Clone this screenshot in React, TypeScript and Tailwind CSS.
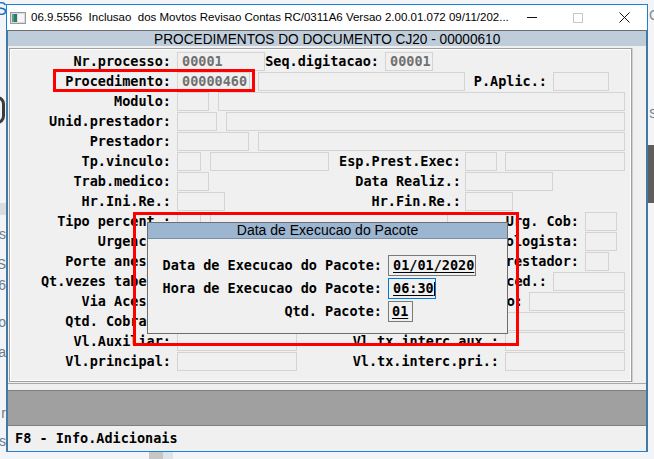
import React from "react"

const MONO = "font-['DejaVu_Sans_Mono','Liberation_Mono',monospace] font-bold text-[13.5px]"

type LblProps = { w: string; cls?: string; children: React.ReactNode }
const Lbl = ({ w, cls = "", children }: LblProps) => (
  <span className={`${w} ${cls} shrink-0 whitespace-nowrap text-right leading-[19px] text-black`}>
    {children}
  </span>
)

type FldProps = { w: string; cls?: string; v?: string }
const Fld = ({ w, cls = "", v }: FldProps) => (
  <div
    className={`${w} ${cls} h-[19px] shrink-0 border border-[#d4d4d4] bg-[#f0f0f0] pl-[4px] leading-[17px] text-[#707070]`}
  >
    {v}
  </div>
)

const Row = ({ children }: { children: React.ReactNode }) => (
  <div className="flex h-[20px]">{children}</div>
)

const Left = ({ children }: { children: React.ReactNode }) => (
  <Lbl w="w-[159px]">{children}</Lbl>
)

const Desktop = () => (
  <>
    <span className="absolute left-[-5px] top-[-4px] text-[18px] text-[#1d6fc2]">S</span>
    <div className="absolute left-[-12px] top-[96px] h-[28px] w-[17px] rounded-[8px] border-[3px] border-[#3c3c3c]" />
    <div className="absolute left-0 top-[203px] h-[12px] w-[6px] bg-[#d9dde2]" />
    <span className="absolute right-[648px] top-[224px] text-[14px] text-[#6b7c8f]">es</span>
    <span className="absolute right-[648px] top-[254px] text-[14px] text-[#6b7c8f]">S</span>
    <span className="absolute right-[648px] top-[275px] text-[14px] text-[#6b7c8f]">6</span>
    <span className="absolute right-[648px] top-[312px] text-[14px] text-[#6b7c8f]">ro</span>
    <span className="absolute right-[648px] top-[342px] text-[14px] text-[#6b7c8f]">ia</span>
    <span className="absolute right-[648px] top-[403px] text-[14px] text-[#6b7c8f]">r</span>
    <span className="absolute right-[648px] top-[431px] text-[14px] text-[#6b7c8f]">s</span>
    <span className="absolute left-[649px] top-[5px] text-[14px] text-[#8a8a8a]">C</span>
    <span className="absolute left-[649px] top-[104px] text-[13px] text-[#6b7c8f]">SL</span>
    <div className="absolute left-[648px] top-[145px] h-[58px] w-[6px] bg-[#5e5e5e]" />
    <div className="absolute left-[149px] top-[452px] h-[7px] w-[14px] bg-[#c6c6c6]" />
    <div className="absolute left-[163px] top-[452px] h-[7px] w-[10px] bg-[#dde3ea]" />
  </>
)

const TitleBar = () => (
  <div className="flex h-[25px] shrink-0 items-center bg-white">
    <svg className="ml-[3px] shrink-0" width="16" height="16" viewBox="0 0 16 16">
      <rect x="0.5" y="2.5" width="15" height="11" fill="#dcdcdc" stroke="#9a9a9a" />
      <rect x="2" y="4" width="5" height="8" fill="#2f7a6c" />
      <rect x="2" y="4" width="2" height="8" fill="#56a08f" />
      <rect x="8" y="4" width="6" height="8" fill="#f6f6f6" />
    </svg>
    <span className="ml-[5px] flex-1 overflow-hidden whitespace-pre text-[11.5px] text-black">
      06.9.5556  Inclusao  dos Movtos Revisao Contas RC/0311A6 Versao 2.00.01.072 09/11/202...
    </span>
    <div className="flex h-full w-[46px] items-center justify-center">
      <div className="h-px w-[10px] bg-[#111]" />
    </div>
    <div className="flex h-full w-[46px] items-center justify-center">
      <div className="h-[10px] w-[10px] border border-[#c8c8c8]" />
    </div>
    <div className="flex h-full w-[46px] items-center justify-center">
      <svg width="11" height="11" viewBox="0 0 11 11">
        <path d="M0.5 0.5 L10.5 10.5 M10.5 0.5 L0.5 10.5" stroke="#111" strokeWidth="1" />
      </svg>
    </div>
  </div>
)

const Form = () => (
  <div className={`flex flex-col pl-[1px] pt-[2px] ${MONO}`}>
    <Row>
      <Left>Nr.processo:</Left>
      <Fld w="w-[88px]" cls="ml-[6px]" v="00001" />
      <Lbl w="w-[114px]">Seq.digitacao:</Lbl>
      <Fld w="w-[48px]" cls="ml-[6px]" v="00001" />
    </Row>
    <Row>
      <Left>Procedimento:</Left>
      <Fld w="w-[73px]" cls="ml-[6px]" v="00000460" />
      <Fld w="w-[207px]" cls="ml-[8px]" />
      <Lbl w="w-[82px]">P.Aplic.:</Lbl>
      <Fld w="w-[56px]" cls="ml-[6px]" />
    </Row>
    <Row>
      <Left>Modulo:</Left>
      <Fld w="w-[32px]" cls="ml-[6px]" />
      <Fld w="w-[407px]" cls="ml-[9px]" />
    </Row>
    <Row>
      <Left>Unid.prestador:</Left>
      <Fld w="w-[40px]" cls="ml-[6px]" />
      <Fld w="w-[399px]" cls="ml-[9px]" />
    </Row>
    <Row>
      <Left>Prestador:</Left>
      <Fld w="w-[72px]" cls="ml-[6px]" />
      <Fld w="w-[367px]" cls="ml-[9px]" />
    </Row>
    <Row>
      <Left>Tp.vinculo:</Left>
      <Fld w="w-[24px]" cls="ml-[6px]" />
      <Fld w="w-[119px]" cls="ml-[9px]" />
      <Lbl w="w-[132px]">Esp.Prest.Exec:</Lbl>
      <Fld w="w-[32px]" cls="ml-[4px]" />
      <Fld w="w-[120px]" cls="ml-[8px]" />
    </Row>
    <Row>
      <Left>Trab.medico:</Left>
      <Fld w="w-[32px]" cls="ml-[6px]" />
      <Lbl w="w-[252px]">Data Realiz.:</Lbl>
      <Fld w="w-[88px]" cls="ml-[4px]" />
    </Row>
    <Row>
      <Left>Hr.Ini.Re.:</Left>
      <Fld w="w-[48px]" cls="ml-[6px]" />
      <Lbl w="w-[236px]">Hr.Fin.Re.:</Lbl>
      <Fld w="w-[48px]" cls="ml-[4px]" />
    </Row>
    <Row>
      <Left>Tipo percent.:</Left>
      <Fld w="w-[24px]" cls="ml-[6px]" />
      <Fld w="w-[238px]" cls="ml-[9px]" />
      <Lbl w="w-[131px]">Urg. Cob:</Lbl>
      <Fld w="w-[32px]" cls="ml-[6px]" />
    </Row>
    <Row>
      <Left>Urgencia:</Left>
      <Fld w="w-[24px]" cls="ml-[6px]" />
      <Fld w="w-[119px]" cls="ml-[9px]" />
      <Lbl w="w-[250px]">Anestesiologista:</Lbl>
      <Fld w="w-[32px]" cls="ml-[6px]" />
    </Row>
    <Row>
      <Left>Porte anest.:</Left>
      <Fld w="w-[48px]" cls="ml-[6px]" />
      <Lbl w="w-[354px]">Prestador:</Lbl>
      <Fld w="w-[24px]" cls="ml-[6px]" />
    </Row>
    <Row>
      <Left>Qt.vezes tabela:</Left>
      <Fld w="w-[32px]" cls="ml-[6px]" />
      <Lbl w="w-[338px]">Tp.proced.:</Lbl>
      <Fld w="w-[72px]" cls="ml-[6px]" />
    </Row>
    <Row>
      <Left>Via Acesso:</Left>
      <Fld w="w-[24px]" cls="ml-[6px]" />
      <Lbl w="w-[322px]">Participacao:</Lbl>
      <Fld w="w-[96px]" cls="ml-[6px]" />
    </Row>
    <Row>
      <Left>Qtd. Cobrada:</Left>
      <Fld w="w-[80px]" cls="ml-[6px]" />
      <Fld w="w-[120px]" cls="ml-[248px]" />
    </Row>
    <Row>
      <Left>Vl.Auxiliar:</Left>
      <Fld w="w-[120px]" cls="ml-[6px]" />
      <Lbl w="w-[202px]">Vl.tx.interc.aux.:</Lbl>
      <Fld w="w-[120px]" cls="ml-[6px]" />
    </Row>
    <Row>
      <Left>Vl.principal:</Left>
      <Fld w="w-[120px]" cls="ml-[6px]" />
      <Lbl w="w-[202px]">Vl.tx.interc.pri.:</Lbl>
      <Fld w="w-[120px]" cls="ml-[6px]" />
    </Row>
  </div>
)

const Dialog = () => (
  <div className="absolute left-[147px] top-[222px] flex h-[112px] w-[361px] flex-col border border-[#6e6e6e] bg-[#f0f0f0]">
    <div className="flex h-[16px] shrink-0 items-center justify-center border-b border-[#7d8fa5] bg-[#9cb6d2] text-[14px] leading-[15px] text-black">
      Data de Execucao do Pacote
    </div>
    <div className={`flex flex-col gap-[2px] pl-[14px] pt-[16px] ${MONO}`}>
      <div className="flex h-[21px] items-center">
        <span className="w-[220px] whitespace-nowrap text-right">Data de Execucao do Pacote:</span>
        <div className="ml-[6px] h-[21px] w-[88px] border border-[#7a7a7a] pl-[4px] leading-[19px] text-black">
          <span className="underline underline-offset-2">01/01/2020</span>
        </div>
      </div>
      <div className="flex h-[21px] items-center">
        <span className="w-[220px] whitespace-nowrap text-right">Hora de Execucao do Pacote:</span>
        <div className="ml-[6px] flex h-[21px] w-[48px] items-center border border-[#0078d7] pl-[4px] leading-[19px] text-black">
          <span className="underline underline-offset-2">06:30</span>
          <span className="h-[14px] w-px bg-black" />
        </div>
      </div>
      <div className="flex h-[21px] items-center">
        <span className="w-[220px] whitespace-nowrap text-right">Qtd. Pacote:</span>
        <div className="ml-[6px] h-[21px] w-[25px] border border-[#7a7a7a] pl-[3px] leading-[19px] text-black">
          <span className="underline underline-offset-2">01</span>
        </div>
      </div>
    </div>
  </div>
)

export default function App() {
  return (
    <div className="relative h-[459px] w-[654px] overflow-hidden bg-[#f2f4f7] font-['Liberation_Sans',sans-serif]">
      <Desktop />

      <div className="absolute left-[6px] top-[4px] flex h-[448px] w-[642px] flex-col border border-[#1883d7] bg-white">
        <TitleBar />
        <div className="flex flex-1 flex-col border-x border-t border-[#6e6e6e] bg-[#f0f0f0]">
          <div className="flex h-[15px] shrink-0 items-center justify-center overflow-hidden bg-[#bfcddb] text-black">
            <span className="inline-block scale-x-[0.91] whitespace-nowrap text-[15px] leading-[15px]">
              PROCEDIMENTOS DO DOCUMENTO CJ20 - 00000610
            </span>
          </div>
          <div className="flex h-[337px] shrink-0 pt-[2px] pb-[1px]">
            <div className="ml-[1px] w-[623px] border border-[#a0a0a0]">
              <div className="h-full border border-white">
                <Form />
              </div>
            </div>
            <div className="flex-1 border-l border-[#d0d0d0]" />
          </div>
          <div className="h-[7px] shrink-0 border-t border-[#a9a9a9]" />
          <div className="h-[36px] shrink-0 border-y border-[#7f7f7f] bg-[#a0a0a0]" />
          <div className={`flex h-[25px] shrink-0 items-center pl-[7px] ${MONO}`}>F8 - Info.Adicionais</div>
        </div>
      </div>

      <Dialog />

      <div className="absolute left-[53px] top-[69px] h-[23px] w-[202px] border-[3px] border-[#ff0000]" />
      <div className="absolute left-[133px] top-[212px] h-[134px] w-[386px] border-[3px] border-[#ff0000]" />
    </div>
  )
}
